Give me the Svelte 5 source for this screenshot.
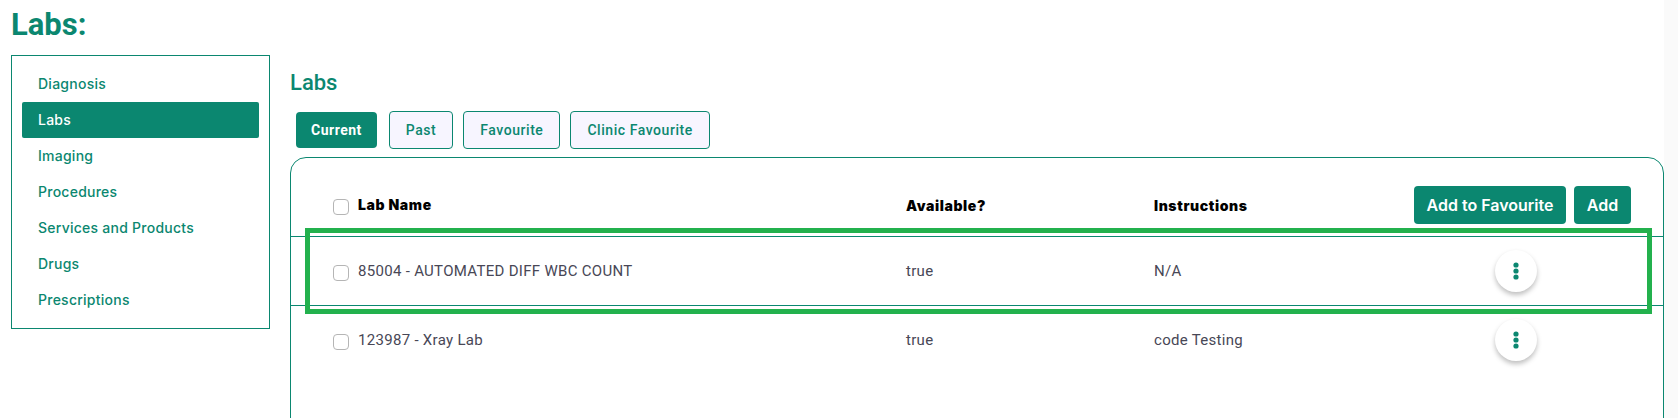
<script lang="ts">
  // Labs tab of the patient chart: side menu on the left, lab table on the right.
  const menu = ['Diagnosis', 'Labs', 'Imaging', 'Procedures', 'Services and Products', 'Drugs', 'Prescriptions'];
  const tabs = ['Current', 'Past', 'Favourite', 'Clinic Favourite'];
  const labs = [
    { name: '85004 - AUTOMATED DIFF WBC COUNT', available: 'true', instructions: 'N/A' },
    { name: '123987 - Xray Lab', available: 'true', instructions: 'code Testing' },
  ];
  let activeMenu = $state('Labs');
  let activeTab = $state('Current');
</script>

<div class="page">
  <h1>Labs:</h1>
  <div class="body">
    <nav class="menu">
      {#each menu as m (m)}
        <button type="button" class="menu-item" class:active={activeMenu === m} onclick={() => (activeMenu = m)}>{m}</button>
      {/each}
    </nav>

    <main class="content">
      <h2>Labs</h2>
      <div class="tabs">
        {#each tabs as t (t)}
          <button type="button" class="tab" class:active={activeTab === t} onclick={() => (activeTab = t)}>{t}</button>
        {/each}
      </div>

      <div class="card">
        <div class="row head">
          <div class="name"><input type="checkbox" /><span>Lab Name</span></div>
          <div>Available?</div>
          <div>Instructions</div>
          <div class="actions">
            <button type="button" class="solid fav">Add to Favourite</button>
            <button type="button" class="solid add">Add</button>
          </div>
        </div>
        {#each labs as lab, i (lab.name)}
          <div class="row item" class:last={i === labs.length - 1}>
            <div class="name"><input type="checkbox" /><span>{lab.name}</span></div>
            <div>{lab.available}</div>
            <div>{lab.instructions}</div>
            <div class="more-cell">
              <button type="button" class="more" aria-label="More">
                <svg width="6" height="18" viewBox="0 0 6 18"><circle cx="3" cy="3" r="2.6" /><circle cx="3" cy="9" r="2.6" /><circle cx="3" cy="15" r="2.6" /></svg>
              </button>
            </div>
          </div>
        {/each}
        <div class="highlight"></div>
      </div>
    </main>
  </div>
</div>

<style>
  :global(body) { background: #fff; overflow: hidden; }
  /* the right border stands in for the pale scroll track at the window edge */
  .page { height: 418px; overflow: hidden; padding: 0 0 0 11px; border-right: 14px solid #fafafa; box-sizing: border-box; font-family: Roboto, sans-serif; }
  h1 { margin: 0; padding-top: 7px; height: 55px; box-sizing: border-box; font-size: 31px; line-height: 36px; font-weight: 700; color: #0b8770; }
  .body { display: flex; align-items: flex-start; gap: 20px; }

  .menu {
    width: 259px;
    height: 274px;
    box-sizing: border-box;
    border: 1px solid #0b8770;
    padding: 10px;
    display: flex;
    flex-direction: column;
    flex: none;
  }
  .menu-item {
    height: 36px;
    padding: 0 0 1px 16px;
    border: 0;
    border-radius: 2px;
    background: transparent;
    text-align: left;
    font-family: Inter, sans-serif;
    font-size: 14px;
    font-weight: 500;
    letter-spacing: 0.25px;
    color: #0b8770;
  }
  .menu-item.active { background: #0b8770; color: #fff; }

  .content { flex: 1; min-width: 0; }
  h2 { margin: 14px 0 0; font-size: 22px; line-height: 28px; font-weight: 500; color: #0b8770; }
  .tabs { display: flex; align-items: center; gap: 10px; margin: 14px 0 8px 6px; height: 38px; }
  .tab {
    height: 38px;
    box-sizing: border-box;
    padding: 0 16px;
    border: 1px solid #0b8770;
    border-radius: 4px;
    background: #f7f5ff;
    font-family: Roboto, sans-serif;
    font-size: 14px;
    font-weight: 500;
    letter-spacing: 0.55px;
    color: #0b8770;
  }
  .tab.active { height: 36px; padding: 0 15px; border: 0; margin-right: 2px; background: #0b8770; color: #fff; font-weight: 700; letter-spacing: 0.5px; }

  .card {
    position: relative;
    height: 300px;
    border: 1px solid #0b8770;
    border-radius: 16px;
    background: #fff;
  }
  .row {
    display: grid;
    grid-template-columns: 573px 248px 1fr 249px;
    align-items: center;
    padding-left: 42px;
    font-size: 15px;
    letter-spacing: 0.3px;
    color: #484756;
    border-bottom: 1px solid #0b8770;
  }
  .row.head {
    box-sizing: border-box;
    height: 79px;
    padding-top: 16px;
    font-family: Inter, sans-serif;
    font-weight: 900;
    font-size: 14px;
    letter-spacing: 0.6px;
    color: #000;
  }
  .row.item { height: 68px; }
  .row.item:first-of-type { background: #fdfdfd; }
  .row.last { border-bottom: 0; }
  .name { display: flex; align-items: center; gap: 9px; }
  .name input {
    appearance: none;
    width: 16px;
    height: 16px;
    margin: 4px 0 0;
    border: 1px solid #b5b5b5;
    border-radius: 4px;
    background: #fff;
    flex: none;
  }
  .head .name span { top: -1px; }
  .name span { position: relative; }
  .actions { display: flex; gap: 8px; }
  .solid {
    height: 38px;
    border: 0;
    border-radius: 4px;
    background: #0b8770;
    color: #fff;
    font-family: Inter, sans-serif;
    font-size: 16px;
    font-weight: 600;
    padding: 0;
  }
  .fav { width: 152px; flex: none; }
  .add { width: 57px; flex: none; }
  .more-cell { display: flex; padding-left: 81px; }
  .more {
    width: 42px;
    height: 42px;
    border: 0;
    border-radius: 50%;
    background: #fff;
    box-shadow: 0 3px 5px rgba(0, 0, 0, 0.25);
    display: flex;
    align-items: center;
    justify-content: center;
    padding: 0;
  }
  .more svg { fill: #0b8770; }

  .highlight {
    position: absolute;
    left: 14px;
    top: 70px;
    width: 1337px;
    height: 76px;
    border: 5px solid #23b14d;
    pointer-events: none;
  }
</style>
